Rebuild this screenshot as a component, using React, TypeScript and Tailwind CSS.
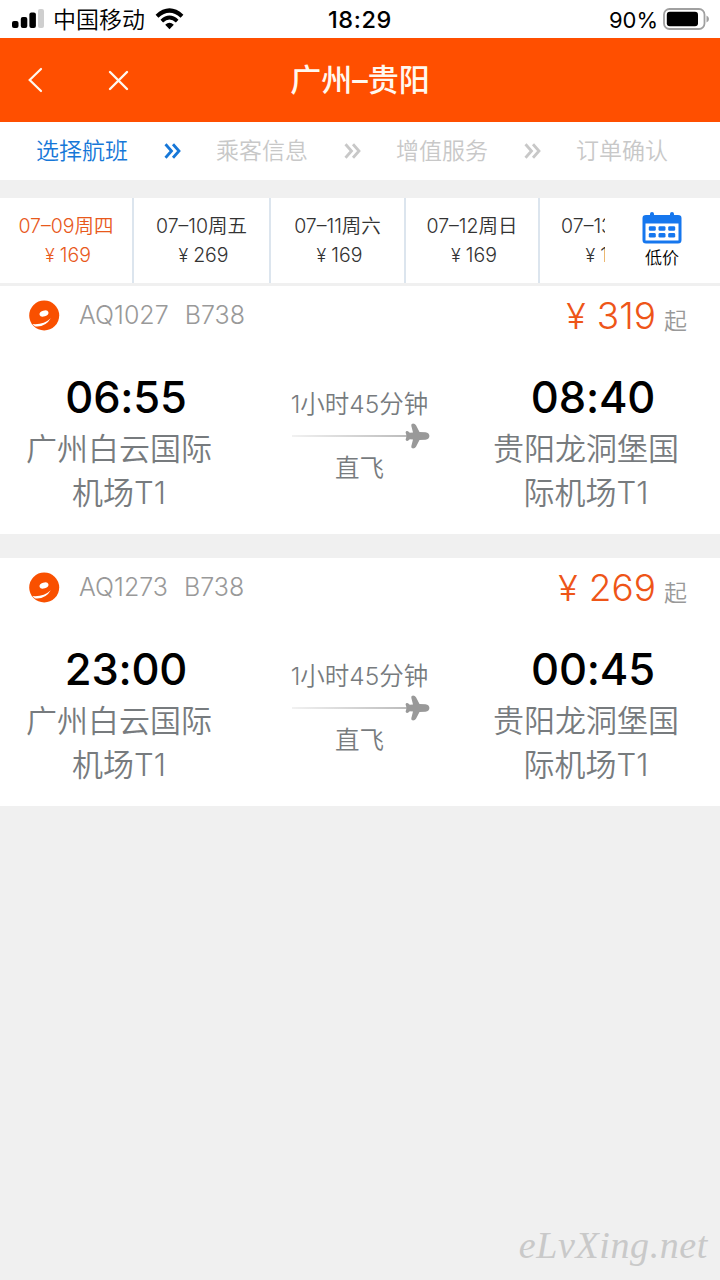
type Flight = {
  code: string
  plane: string
  price: string
  depart: string
  arrive: string
  from: string[]
  to: string[]
}

const steps = ['选择航班', '乘客信息', '增值服务', '订单确认']

const days = [
  { date: '07–09周四', price: '169', width: 'w-[134px]' },
  { date: '07–10周五', price: '269', width: 'w-[137px]' },
  { date: '07–11周六', price: '169', width: 'w-[135px]' },
  { date: '07–12周日', price: '169', width: 'w-[134px]' },
  { date: '07–13周一', price: '169', width: 'w-[135px]' },
]

const flights: Flight[] = [
  {
    code: 'AQ1027',
    plane: 'B738',
    price: '319',
    depart: '06:55',
    arrive: '08:40',
    from: ['广州白云国际', '机场T1'],
    to: ['贵阳龙洞堡国', '际机场T1'],
  },
  {
    code: 'AQ1273',
    plane: 'B738',
    price: '269',
    depart: '23:00',
    arrive: '00:45',
    from: ['广州白云国际', '机场T1'],
    to: ['贵阳龙洞堡国', '际机场T1'],
  },
]

function StatusBar() {
  return (
    <div className="grid h-[38px] grid-cols-3 items-center bg-white text-black">
      <div className="flex items-center pl-3">
        <svg width="32" height="20" viewBox="0 0 32 20">
          <rect x="0" y="12" width="6.5" height="7" rx="2" />
          <rect x="8.8" y="8" width="6.5" height="11" rx="2" />
          <rect x="17.4" y="3.5" width="6.5" height="15.5" rx="2" />
          <rect x="26" y="0" width="6" height="19" rx="2" fill="#cfcfcf" />
        </svg>
        <span className="ml-[9px] pt-[2px] text-[23px] font-[350] leading-[36px]">中国移动</span>
        <svg className="ml-[10px]" width="29" height="22" viewBox="0 0 29 22">
          <path d="M2 8.2Q14.5-3.2 27 8.2" fill="none" stroke="#000" strokeWidth="4.2" />
          <path d="M6.8 13.2Q14.5 6 22.2 13.2" fill="none" stroke="#000" strokeWidth="3.8" />
          <path d="M10.2 16.8Q14.5 12.8 18.8 16.8L14.5 21.2Z" />
        </svg>
      </div>
      <div className="pt-[2px] text-center text-[23.5px] font-[550] leading-[36px] tracking-[0.6px]">
        18:29
      </div>
      <div className="flex items-center justify-end pr-[11px]">
        <span className="mr-[5px] pt-[2px] text-[22px] leading-[36px]">90%</span>
        <svg width="46" height="22" viewBox="0 0 46 22">
          <rect x="1" y="1" width="40.5" height="20" rx="5.5" fill="none" stroke="#a0a0a0" strokeWidth="1.8" />
          <rect x="3.8" y="3.8" width="31.2" height="14.4" rx="3" />
          <path d="M43.5 7.5Q46 8.5 46 11T43.5 14.5Z" fill="#a0a0a0" />
        </svg>
      </div>
    </div>
  )
}

function Header() {
  return (
    <div className="grid h-[84px] grid-cols-[1fr_auto_1fr] items-center bg-[#ff4f00] text-[#fff8ef]">
      <div className="flex items-center pl-7">
        <svg width="15" height="26" viewBox="0 0 15 26" fill="none" stroke="currentColor" strokeWidth="2.2" strokeLinecap="round">
          <path d="M13 2L1.7 13L13 24" />
        </svg>
        <svg className="ml-[65px]" width="21" height="21" viewBox="0 0 21 21" fill="none" stroke="currentColor" strokeWidth="2.4" strokeLinecap="round">
          <path d="M2 2L19 19M19 2L2 19" />
        </svg>
      </div>
      <h1 className="text-[31px] font-medium leading-[84px]">广州–贵阳</h1>
    </div>
  )
}

function Chevrons() {
  return (
    <svg width="17" height="16" viewBox="0 0 17 16" fill="none" stroke="currentColor" strokeWidth="2.8">
      <path d="M1.5 1.2L7.5 8L1.5 14.8M9 1.2L15 8L9 14.8" />
    </svg>
  )
}

function Steps() {
  return (
    <div className="flex h-[58px] items-center bg-white pl-9">
      {steps.map((step, i) => (
        <div
          key={step}
          className={i === 0 ? 'flex w-[180px] shrink-0 items-center text-[#1677d8]' : 'flex w-[180px] shrink-0 items-center text-[#c8c8c8]'}
        >
          <span className="w-[92px] whitespace-nowrap text-[23px] font-[350] leading-[58px]">{step}</span>
          {i < steps.length - 1 && (
            <span className="ml-9">
              <Chevrons />
            </span>
          )}
        </div>
      ))}
    </div>
  )
}

function Calendar() {
  return (
    <svg width="40" height="32" viewBox="0 0 40 32">
      <path d="M4 3H36Q39.5 3 39.5 6V28Q39.5 31.5 36 31.5H4Q.5 31.5 .5 28V6Q.5 3 4 3Z" fill="#1677ee" />
      <rect x="8" y="0" width="4" height="7" rx="2" fill="#1677ee" />
      <rect x="28" y="0" width="4" height="7" rx="2" fill="#1677ee" />
      <rect x="3.5" y="11.5" width="33" height="17" fill="#fff" />
      {[14.2, 21].map((y) =>
        [6.8, 16.5, 26.2].map((x) => (
          <rect key={`${x}-${y}`} x={x} y={y} width="7" height="4.6" rx="1.4" fill="#1677ee" />
        ))
      )}
    </svg>
  )
}

function DateBar() {
  return (
    <div className="flex h-[85px] overflow-hidden bg-white">
      <div className="flex w-[605px] overflow-hidden">
        {days.map((day, i) => (
          <div
            key={day.date}
            className={`${day.width} ${i === 0 ? 'text-[#e8591c]' : 'text-[#333]'} shrink-0 border-r-2 border-[#dce5ee] pt-[14px] text-center text-[19.5px] font-[350] leading-[29px] whitespace-nowrap`}
          >
            <div>{day.date}</div>
            <div className="flex justify-center pl-1">
              <span className="mr-[5px] text-[18px]">¥</span>
              {day.price}
            </div>
          </div>
        ))}
      </div>
      <div className="flex w-[114px] flex-col items-center pt-[14px]">
        <Calendar />
        <span className="pt-px text-[17px] font-[350] leading-[26px] text-black">低价</span>
      </div>
    </div>
  )
}

function AirlineLogo() {
  return (
    <svg width="31" height="31" viewBox="0 0 31 31">
      <circle cx="15.2" cy="15.5" r="15" fill="#f95000" />
      <ellipse cx="15" cy="13.5" rx="4.6" ry="2.9" transform="rotate(-18 15 13.5)" fill="#fff" />
      <path d="M3.5 24Q14.5 25 21.8 18.2Q16.5 27.2 6.5 26.4Q4.8 25.8 3.5 24Z" fill="#fff" />
    </svg>
  )
}

function Route() {
  return (
    <svg width="140" height="26" viewBox="0 0 140 26">
      <defs>
        <linearGradient id="trail">
          <stop offset="0" stopColor="#eee" />
          <stop offset="1" stopColor="#aaa" />
        </linearGradient>
      </defs>
      <rect x="2" y="12.2" width="118" height="1.6" fill="url(#trail)" />
      <path
        d="M135.5 9.2L129.5 8.9L126 2.2Q125 .5 123 .5Q120.8.7 121.3 2.8L123 9.4L119.8 9.8L118 8.2Q115.8 7.6 115.6 9.4L116.6 13L115.6 16.6Q115.8 18.4 118 17.8L119.8 16.2L123 16.6L121.3 23.2Q120.8 25.3 123 25.5Q125 25.5 126 23.8L129.5 17.1L135.5 16.8Q139.4 16 139.4 13T135.5 9.2Z"
        fill="#999"
      />
    </svg>
  )
}

function Stop({ time, airport }: { time: string; airport: string[] }) {
  return (
    <div className="w-[190px] text-center">
      <div className="text-[43.5px] font-[550] leading-[52px] tracking-[-0.2px] text-black">{time}</div>
      <div className="-ml-[7px] mr-[7px] mt-1 whitespace-nowrap text-[31px] font-[350] leading-[43.5px] text-[#777b7e]">
        {airport.map((line) => (
          <div key={line}>{line}</div>
        ))}
      </div>
    </div>
  )
}

function FlightCard({ flight }: { flight: Flight }) {
  return (
    <div className="h-[248px] bg-white">
      <div className="flex h-[58px] items-center pl-[29px] pr-[33px]">
        <AirlineLogo />
        <span className="ml-[19px] pt-[2px] text-[25px] font-[350] text-[#999]">{flight.code}</span>
        <span className="ml-4 pt-[2px] text-[25px] font-[350] text-[#999]">{flight.plane}</span>
        <div className="ml-auto flex items-baseline pt-[2px]">
          <span className="mr-[11px] text-[36px] font-[350] leading-[58px] text-[#ee5518]">¥</span>
          <span className="text-[37px] font-[350] leading-[58px] text-[#ee5518]">{flight.price}</span>
          <span className="ml-2 text-[23px] font-[350] text-[#999]">起</span>
        </div>
      </div>
      <div className="flex justify-between pl-[31px] pr-[32px] pt-[27px]">
        <Stop time={flight.depart} airport={flight.from} />
        <div className="flex flex-col items-center pt-[14px] text-[24.5px] font-[350] leading-[38px] text-[#777b7e]">
          <div className="whitespace-nowrap">1小时45分钟</div>
          <Route />
          <div>直飞</div>
        </div>
        <Stop time={flight.arrive} airport={flight.to} />
      </div>
    </div>
  )
}

export default function App() {
  return (
    <div className="flex h-[1280px] w-[720px] flex-col overflow-hidden bg-[#f0f0f0] font-['Inter','Noto_Sans_CJK_SC',sans-serif]">
      <StatusBar />
      <Header />
      <Steps />
      <div className="mt-[18px]">
        <DateBar />
      </div>
      <div className="mt-[3px] flex flex-col gap-6">
        {flights.map((flight) => (
          <FlightCard key={flight.code} flight={flight} />
        ))}
      </div>
      <div className="mt-auto flex h-[70px] items-center justify-end pr-3 font-['Liberation_Serif',serif] text-[38px] italic tracking-[0.6px] text-[#c9c9c9]">
        eLvXing.net
      </div>
    </div>
  )
}
